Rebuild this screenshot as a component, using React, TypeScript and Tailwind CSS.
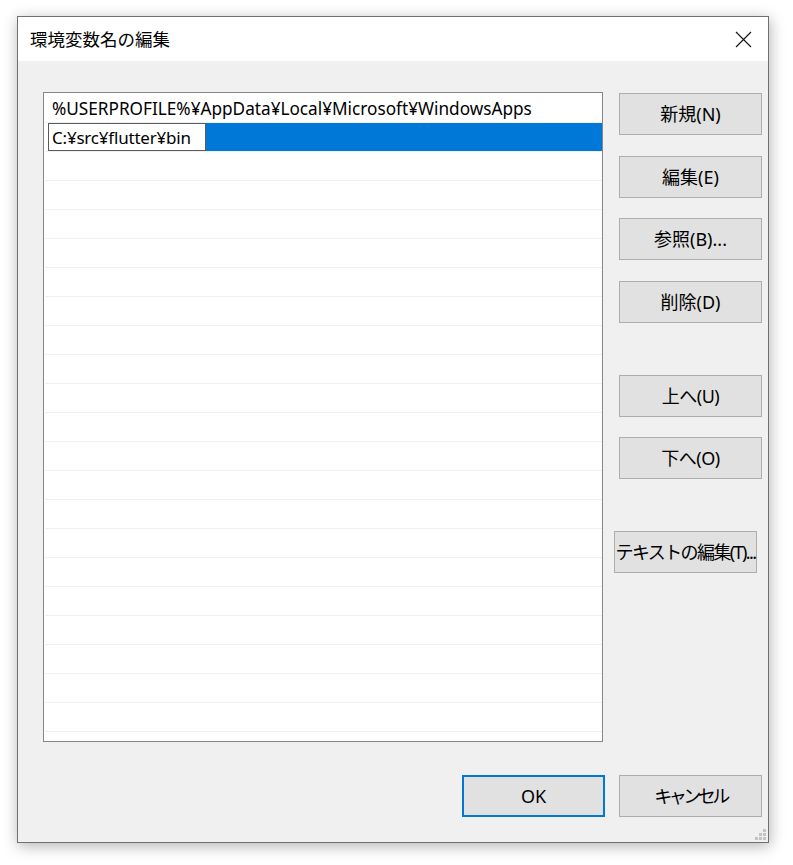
import React from 'react';

const uiFont = {
  fontFamily: '"Noto Sans", "Noto Sans CJK JP", sans-serif',
};

const sideButtons: { label: string; extra: string }[] = [
  { label: '新規(N)', extra: 'mt-0' },
  { label: '編集(E)', extra: 'mt-[21px]' },
  { label: '参照(B)...', extra: 'mt-[20px]' },
  { label: '削除(D)', extra: 'mt-[21px]' },
  { label: '上へ(U)', extra: 'mt-[52px] tracking-[-0.5px]' },
  { label: '下へ(O)', extra: 'mt-[20px] tracking-[-0.5px]' },
  { label: 'テキストの編集(T)...', extra: 'mt-[52px] -ml-[5px] text-[17px] tracking-[-1.6px]' },
];

const ROW_COUNT = 22;

function DialogButton({ label, className = '', primary = false }: { label: string; className?: string; primary?: boolean }) {
  return (
    <button
      className={
        'h-[42px] w-[143px] bg-[#e1e1e1] text-[18px] text-black flex items-center justify-center whitespace-nowrap ' +
        (primary ? 'border-2 border-[#0078d7] ' : 'border border-[#adadad] ') +
        className
      }
    >
      {label}
    </button>
  );
}

function PathList() {
  const rows = Array.from({ length: ROW_COUNT }, (_, i) => i);
  return (
    <div className="w-[560px] h-[650px] border border-[#828790] bg-white pt-px">
      {rows.map((i) => (
        <div key={i} className="h-[29px] flex flex-col">
          <div className="h-[28px] flex items-center">
            {i === 0 && (
              <span className="pl-[8px] pt-[2px] text-[17.2px] text-black whitespace-nowrap">
                %USERPROFILE%¥AppData¥Local¥Microsoft¥WindowsApps
              </span>
            )}
            {i === 1 && (
              <div className="flex h-full w-full pl-[4px]">
                {/* inline edit box over the selected row */}
                <div className="w-[158px] h-full border border-[#5a5a5a] bg-white flex items-center pl-[3px] pt-px text-[17px] tracking-[-0.2px] text-black whitespace-nowrap">
                  C:¥src¥flutter¥bin
                </div>
                <div className="flex-1 bg-[#0078d7]" />
              </div>
            )}
          </div>
          <div className="h-px ml-px bg-[#f0f0f0]" />
        </div>
      ))}
    </div>
  );
}

export default function App() {
  return (
    <div className="w-[793px] h-[865px] bg-white pl-[17px] pt-[16px]" style={uiFont}>
      <div className="relative w-[752px] h-[827px] border border-[#707070] bg-[#f0f0f0] flex flex-col shadow-[1px_3px_14px_rgba(0,0,0,0.3)]">
        {/* title bar */}
        <div className="h-[44px] bg-white flex items-center justify-between pl-[12px] pr-[16px]">
          <span className="text-[17.5px] text-black">環境変数名の編集</span>
          <svg width="17" height="17" viewBox="0 0 17 17" className="text-[#111]">
            <path d="M1 1 L16 16 M16 1 L1 16" stroke="currentColor" strokeWidth="1.1" fill="none" />
          </svg>
        </div>

        {/* body */}
        <div className="flex-1 flex flex-col pl-[25px] pr-[6px] pt-[31px]">
          <div className="flex items-start">
            <PathList />
            <div className="ml-[16px] pt-px flex flex-col">
              {sideButtons.map((b) => (
                <DialogButton key={b.label} label={b.label} className={b.extra} />
              ))}
            </div>
          </div>
          <div className="mt-[33px] flex justify-end gap-[14px]">
            <DialogButton label="OK" primary />
            <DialogButton label="キャンセル" className="text-[16.5px] tracking-[-3.5px]" />
          </div>
        </div>

        {/* size grip */}
        <svg width="11" height="11" viewBox="0 0 11 11" className="absolute right-[2px] bottom-[2px]">
          <rect x="8" y="0" width="3" height="3" fill="#c2c2c2" />
          <rect x="4" y="4" width="3" height="3" fill="#c2c2c2" />
          <rect x="8" y="4" width="3" height="3" fill="#c2c2c2" />
          <rect x="0" y="8" width="3" height="3" fill="#c2c2c2" />
          <rect x="4" y="8" width="3" height="3" fill="#c2c2c2" />
          <rect x="8" y="8" width="3" height="3" fill="#c2c2c2" />
        </svg>
      </div>
    </div>
  );
}
